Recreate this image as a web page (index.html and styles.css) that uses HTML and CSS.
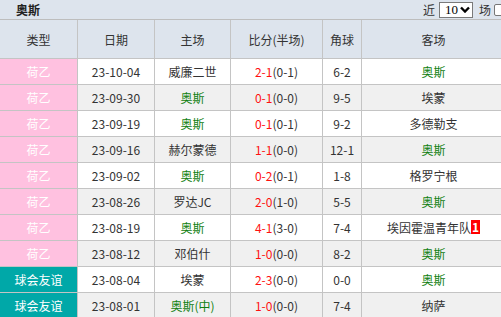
FILE: index.html
```html
<!DOCTYPE html>
<html>
<head>
<meta charset="utf-8">
<link rel="stylesheet" href="styles.css">
</head>
<body>
<div class="page">
  <div class="topbar">
    <span class="title">奥斯</span>
    <div class="filter">
      <span class="lbl">近</span>
      <span class="sel"><span class="selval">10</span><svg class="chev" width="10" height="7" viewBox="0 0 10 7"><path d="M1 1.5 L5 5.5 L9 1.5" fill="none" stroke="#000" stroke-width="2.4"/></svg></span>
      <span class="lbl lbl2">场</span>
      <span class="chk"></span>
    </div>
  </div>
  <table class="tbl">
    <colgroup>
      <col class="c1"><col class="c2"><col class="c3"><col class="c4"><col class="c5"><col class="c6">
    </colgroup>
    <thead>
      <tr><th>类型</th><th>日期</th><th>主场</th><th>比分(半场)</th><th>角球</th><th>客场</th></tr>
    </thead>
    <tbody>
      <tr class="w"><td class="lg pink">荷乙</td><td>23-10-04</td><td>威廉二世</td><td><span class="sc">2-1</span>(0-1)</td><td>6-2</td><td class="g">奥斯</td></tr>
      <tr class="s"><td class="lg pink">荷乙</td><td>23-09-30</td><td class="g">奥斯</td><td><span class="sc">0-1</span>(0-0)</td><td>9-5</td><td>埃蒙</td></tr>
      <tr class="w"><td class="lg pink">荷乙</td><td>23-09-19</td><td class="g">奥斯</td><td><span class="sc">0-1</span>(0-1)</td><td>9-2</td><td>多德勒支</td></tr>
      <tr class="s"><td class="lg pink">荷乙</td><td>23-09-16</td><td>赫尔蒙德</td><td><span class="sc">1-1</span>(0-0)</td><td>12-1</td><td class="g">奥斯</td></tr>
      <tr class="w"><td class="lg pink">荷乙</td><td>23-09-02</td><td class="g">奥斯</td><td><span class="sc">0-2</span>(0-1)</td><td>1-8</td><td>格罗宁根</td></tr>
      <tr class="s"><td class="lg pink">荷乙</td><td>23-08-26</td><td>罗达JC</td><td><span class="sc">2-0</span>(1-0)</td><td>5-5</td><td class="g">奥斯</td></tr>
      <tr class="w"><td class="lg pink">荷乙</td><td>23-08-19</td><td class="g">奥斯</td><td><span class="sc">4-1</span>(3-0)</td><td>7-4</td><td>埃因霍温青年队<span class="badge">1</span></td></tr>
      <tr class="s"><td class="lg pink">荷乙</td><td>23-08-12</td><td>邓伯什</td><td><span class="sc">1-0</span>(0-0)</td><td>8-2</td><td class="g">奥斯</td></tr>
      <tr class="w"><td class="lg teal">球会友谊</td><td>23-08-04</td><td>埃蒙</td><td><span class="sc">2-3</span>(0-0)</td><td>0-0</td><td class="g">奥斯</td></tr>
      <tr class="s"><td class="lg teal">球会友谊</td><td>23-08-01</td><td class="g">奥斯(中)</td><td><span class="sc">1-0</span>(0-0)</td><td>7-4</td><td>纳萨</td></tr>
    </tbody>
  </table>
</div>
</body>
</html>
```
FILE: styles.css
```css
html, body {
  margin: 0;
  padding: 0;
  background: #ffffff;
}
body {
  font-family: "Noto Sans CJK SC", "Noto Sans", sans-serif;
  font-size: 12px;
  color: #222;
  overflow: hidden;
}
.page {
  width: 506px;
}
.topbar {
  height: 19px;
  background: #dde4ed;
  border-bottom: 1px solid #bdbdbd;
  display: flex;
  align-items: center;
  justify-content: space-between;
  padding-left: 16px;
  box-sizing: content-box;
}
.title {
  font-weight: bold;
  color: #222;
  line-height: 19px;
}
.filter {
  display: flex;
  align-items: center;
  gap: 4px;
  padding-right: 0;
  margin-right: 0;
}
.lbl {
  color: #333;
  line-height: 19px;
}
.lbl2 {
  margin-left: 2px;
}
.sel {
  display: flex;
  align-items: center;
  justify-content: space-between;
  height: 16px;
  border: 1px solid #7a7a7a;
  background: #fff;
  padding: 0 2px 0 5px;
  box-sizing: border-box;
  width: 34px;
  color: #000;
  font-family: "Liberation Serif", serif;
  font-size: 13px;
  line-height: 14px;
}
.chev {
  display: block;
}
.chk {
  width: 12px;
  height: 12px;
  border: 1px solid #777;
  border-radius: 2px;
  background: #fff;
  box-sizing: border-box;
  margin-left: -1px;
}
.tbl {
  border-collapse: separate;
  border-spacing: 0;
  table-layout: fixed;
  width: 506px;
}
.c1 { width: 78px; }
.c2 { width: 77px; }
.c3 { width: 76px; }
.c4 { width: 92px; }
.c5 { width: 39px; }
.c6 { width: 144px; }
th, td {
  padding: 0;
  text-align: center;
  border-right: 1px solid #c4c4c4;
  border-bottom: 1px solid #c4c4c4;
  white-space: nowrap;
  overflow: hidden;
}
th {
  height: 38px;
  background: #dde4ed;
  font-weight: normal;
  color: #333;
}
td {
  height: 25px;
  color: #333;
}
tr.w td { background: #ffffff; }
tr.s td { background: #f0f0f0; }
tr td.pink { background: #ffc1e0; color: #fff; }
tr td.teal { background: #00a8a8; color: #fff; }
td.g { color: #108010; }
.sc { color: #ff1010; }
.badge {
  display: inline-block;
  background: #ff0000;
  color: #fff;
  font-weight: bold;
  padding: 0 1px;
  line-height: 14px;
  vertical-align: 1px;
}
```
